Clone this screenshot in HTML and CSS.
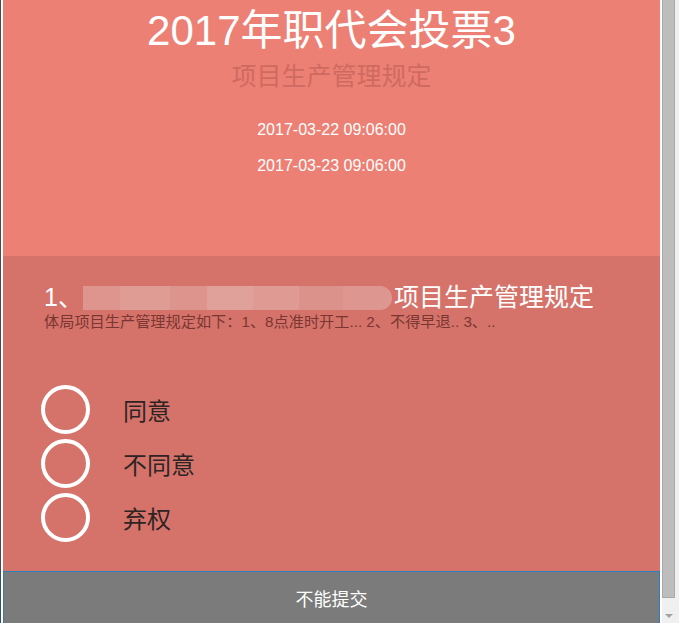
FILE: index.html
```html
<!DOCTYPE html>
<html lang="zh-CN">
<head>
<meta charset="utf-8">
<title>2017年职代会投票3</title>
<link rel="stylesheet" href="styles.css">
</head>
<body>
<div class="frame">
  <main class="page">
    <header class="hero">
      <h1 class="hero-title">2017年职代会投票3</h1>
      <div class="hero-sub">项目生产管理规定</div>
      <div class="hero-dates">
        <div class="date">2017-03-22 09:06:00</div>
        <div class="date">2017-03-23 09:06:00</div>
      </div>
    </header>
    <section class="question">
      <h2 class="q-title"><span>1、</span><span class="redact"></span><span>项目生产管理规定</span></h2>
      <p class="q-desc">体局项目生产管理规定如下：1、8点准时开工... 2、不得早退.. 3、..</p>
      <ul class="options">
        <li class="option"><span class="radio"></span><span class="label">同意</span></li>
        <li class="option"><span class="radio"></span><span class="label">不同意</span></li>
        <li class="option"><span class="radio"></span><span class="label">弃权</span></li>
      </ul>
    </section>
    <button class="submit" type="button">不能提交</button>
  </main>
  <div class="scrollbar">
    <div class="thumb"></div>
    <div class="arrow"></div>
  </div>
</div>
</body>
</html>
```
FILE: styles.css
```css
html, body {
  margin: 0;
  padding: 0;
  height: 623px;
  overflow: hidden;
  background: #ffffff;
}
body {
  font-family: "Liberation Sans", "Noto Sans CJK SC", sans-serif;
}
.frame {
  display: flex;
  height: 623px;
  border-left: 1px solid #4a4a4a;
  padding-left: 2px;
}
.page {
  width: 657px;
  flex: none;
  display: flex;
  flex-direction: column;
}
.hero {
  height: 256px;
  flex: none;
  background: #ed8074;
  text-align: center;
  color: #ffffff;
}
.hero-title {
  margin: 7px 0 0;
  font-size: 42px;
  line-height: 48px;
  font-weight: normal;
}
.hero-sub {
  margin-top: 6px;
  font-size: 25px;
  line-height: 30px;
  color: #cf6a62;
}
.hero-dates {
  margin-top: 21px;
  font-size: 16px;
  line-height: 36px;
}
.question {
  height: 315px;
  flex: none;
  background: #d5736b;
  padding: 27px 0 0 41px;
  box-sizing: border-box;
}
.q-title {
  margin: 0;
  display: flex;
  align-items: center;
  font-size: 25px;
  line-height: 29px;
  font-weight: normal;
  color: #ffffff;
}
.redact {
  width: 309px;
  height: 24px;
  margin-right: 2px;
  border-radius: 0 12px 12px 0;
  background: linear-gradient(90deg,
    #dd958d 0 12%, #df9c95 12% 28%, #dc948c 28% 40%, #e0a19b 40% 55%,
    #de9a93 55% 70%, #db928b 70% 84%, #de9790 84% 100%);
}
.q-desc {
  margin: 0;
  font-size: 15.2px;
  line-height: 20px;
  color: #7a3631;
}
.options {
  list-style: none;
  margin: 50px 0 0 -3px;
  padding: 0;
}
.option {
  display: flex;
  align-items: center;
  height: 54px;
}
.radio {
  width: 49px;
  height: 49px;
  box-sizing: border-box;
  border: 4px solid #ffffff;
  border-radius: 50%;
  flex: none;
}
.label {
  margin-left: 33px;
  font-size: 24px;
  color: #2e2424;
}
.submit {
  flex: none;
  height: 54px;
  margin: 0;
  padding: 0;
  border: 1px solid #2a7fc0;
  background: #7b7b7b;
  color: #ffffff;
  font-family: "Noto Sans CJK SC", sans-serif;
  font-size: 18px;
  line-height: 52px;
  text-align: center;
}
.scrollbar {
  position: relative;
  flex: none;
  width: 19px;
  background: #f0f0f0;
  border-left: 2px solid #ffffff;
  box-sizing: border-box;
}
.thumb {
  width: 13px;
  height: 598px;
  box-sizing: border-box;
  background: #bdbdbd;
  border-left: 1px solid #a9a9a9;
  border-right: 1px solid #a9a9a9;
  border-bottom: 1px solid #a9a9a9;
}
.arrow {
  position: absolute;
  left: 3px;
  top: 614px;
  width: 0;
  height: 0;
  border-left: 4px solid transparent;
  border-right: 4px solid transparent;
  border-top: 4px solid #a3a3a3;
}
```
